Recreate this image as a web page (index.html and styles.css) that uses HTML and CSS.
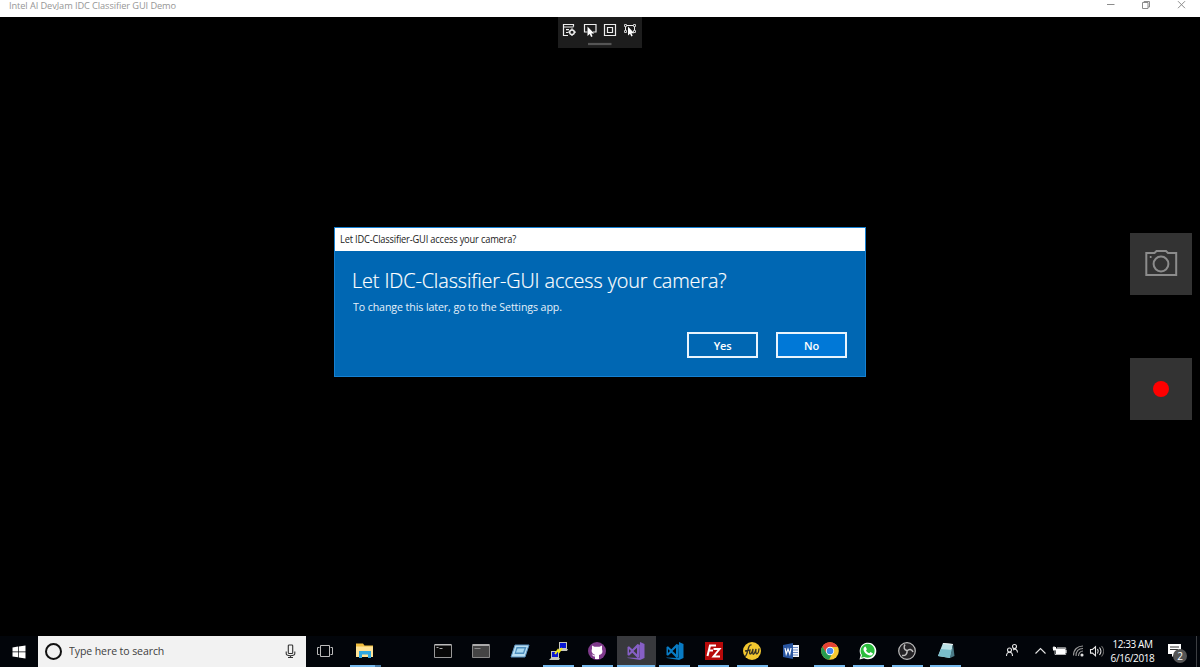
FILE: index.html
```html
<!DOCTYPE html>
<html lang="en">
<head>
<meta charset="utf-8">
<title>Intel AI DevJam IDC Classifier GUI Demo</title>
<link rel="stylesheet" href="styles.css">
</head>
<body>
<div class="screen">
  <header class="titlebar">
    <span class="app-title">Intel AI DevJam IDC Classifier GUI Demo</span>
    <svg class="window-controls" width="90" height="16" viewBox="0 0 90 16" fill="none" stroke="#8c8c8c" stroke-width="1"><path d="M7 4.500h7.500M42.500 2.500h5.500v6h-5.500zM44 2.500V1.500h5.500V7h-1.500M78 1.200l7 7m0-7l-7 7"/></svg>
  </header>
  <main class="stage">
    <div class="debug-bar">
      <svg width="84" height="30" viewBox="0 0 84 30" fill="none" stroke="#eee" stroke-width="1.200">
        <path d="M15.500 9.500V7.500h-10v11h4.500M5.500 10h10M8 12.700h3M8 15.500h2"/><circle cx="14" cy="15.200" r="2.300" stroke-width="1.500"/><path d="M14 11.300v1.600m0 4.600v1.600m-3.900-3.900h1.600m4.600 0h1.600"/>
        <path d="M29.500 15h-3V7.500h11.500v7.500H35"/><path fill="#fff" stroke="none" d="M29.500 9.500v9.500l2.200-1.900 1.400 2.900 1.500-.7-1.300-2.800h2.900z"/>
        <path d="M46.500 7.500h11v11h-11zM49.500 10.500h5v5h-5z"/>
        <path stroke-width="1" d="M69 8.500h6M67.500 10v3M76.500 10v3"/><path stroke-width="1" stroke="#ccc" d="M66.500 7.500h2v2h-2zM75.500 7.500h2v2h-2zM66.500 13.500h2v2h-2zM75.500 13.500h2v2h-2z"/><path fill="#fff" stroke="none" d="M70 9.500v9l2-1.800 1.400 2.800 1.300-.7-1.200-2.600h2.700z"/>
        <path stroke="#555" stroke-width="2.200" d="M30 27h23.500"/>
      </svg>
    </div>
    <section class="dialog">
      <div class="dialog-bar"><span class="dialog-caption">Let IDC-Classifier-GUI access your camera?</span></div>
      <div class="dialog-body">
        <h1 class="heading"><span>Let IDC-Classifier-GUI access your camera?</span></h1>
        <p class="note"><span>To change this later, go to the Settings app.</span></p>
        <div class="actions"><button class="choice">Yes</button><button class="choice primary">No</button></div>
      </div>
    </section>
    <aside class="capture">
      <button class="capture-button" aria-label="Photo"><svg width="62" height="62" viewBox="0 0 62 62" fill="none" stroke="#8c8c8c" stroke-width="2"><path d="M16.300 20h8.200l2-2h9.500l2 2h8.200v22H16.300z"/><circle cx="31" cy="31" r="7.400"/><path d="M19.800 24h1.700"/></svg></button>
      <button class="capture-button" aria-label="Record"><span class="record-dot"></span></button>
    </aside>
  </main>
  <footer class="taskbar">
    <div class="start"><svg width="14" height="14" viewBox="0 0 14 14" fill="#fff"><path d="M.5 2.400L6 1.600v5H.5zM6.700 1.500L13.500.5v6.100H6.700zM.5 7.300H6v5L.5 11.500zM6.700 7.300h6.800v6.200l-6.800-1z"/></svg></div>
    <div class="search"><span class="cortana"></span><span class="search-text">Type here to search</span>
      <svg class="mic" width="11" height="15" viewBox="0 0 11 15" fill="none" stroke="#333" stroke-width="1.100"><rect x="3.300" y="1" width="4.400" height="8.500" rx=".8"/><path d="M1.200 7.500v2c0 3 8.600 3 8.600 0v-2M5.500 11.700V13M3 13.500h5"/></svg>
    </div>
    <div class="task view"><svg width="18" height="16" viewBox="0 0 18 16" fill="none" stroke="#bbb"><path d="M4.500 2.500h9v11h-9zM3.500 4.500h-2v7h2M14.500 4.500h2v7h-2"/></svg></div>
    <div class="task open explorer"><svg width="20" height="18" viewBox="0 0 20 18"><path fill="#f0bd3d" d="M1 1.500h7l1.500 2H18V15H1z"/><path fill="#ffe396" d="M1 4.500h17V15H1z"/><path fill="#2fa8e2" d="M4 9h12v7h-3v-3.500H7V16H4z"/></svg></div>
    <div class="apps">
      <div class="task"><svg width="18" height="16" viewBox="0 0 18 16"><path fill="#080808" stroke="#999" d="M.5 1.500h17v13H.5z"/><path fill="#bbb" d="M1 1h16v1.500H1z"/><path stroke="#aaa" d="M2.500 4.500h2m1 1h3"/></svg></div>
      <div class="task"><svg width="18" height="16" viewBox="0 0 18 16"><path fill="#444" stroke="#888" d="M.5 1.500h17v13H.5z"/><path fill="#aaa" d="M1 1h16v2H1z"/><path stroke="#888" d="M2.500 5.500h6"/></svg></div>
      <div class="task"><svg width="20" height="16" viewBox="0 0 20 16"><path fill="#b8ddf0" stroke="#5990bd" d="M5 2h14l-4 12H1z"/><path fill="#4e8fbe" d="M6.500 4h10l-2.500 7H4.500z"/><path fill="#a9d8ef" d="M7.500 5.500h7l-1.500 4H6z"/></svg></div>
      <div class="task open"><svg width="20" height="20" viewBox="0 0 20 20"><path fill="#c6c6bb" d="M10 1h8v7h1l-1 2H8l2-2zM2 10h8v7h1l-1 2H0l2-2z"/><path fill="#0817d4" d="M11 2h6v5h-6zM3 11h6v5H3z"/><path fill="none" stroke="#eee71c" stroke-width="1.800" d="M6 13l3-4 1 2 3-4"/></svg></div>
      <div class="task open"><svg width="20" height="20" viewBox="0 0 20 20"><circle cx="10" cy="10" r="9" fill="#7f3a8c"/><path fill="#fff" d="M5 4.500l2.500 1.200h5L15 4.500v3.700c1.500 4-1 5.500-3 5.700v4h-4V15.500c-2.500.5-2-1.500-3.500-2 2-.5 2 1 3.500.7v-.4C5 13 4 10 5 8z"/></svg></div>
      <div class="task open active"><svg width="20" height="20" viewBox="0 0 20 20"><path fill="#865fc5" fill-rule="evenodd" d="M14 1l4.500 2v14L14 19 1.500 17v-.5l12 .5zM1.500 6l1.500-.7 3.300 2.900L11.500 3 14 4v12l-2.500 1-5.200-5.200L3 14.700 1.500 14zM3 8v4l2-2zm8-1.200L7.500 10l3.500 3.200z"/></svg></div>
      <div class="task open"><svg width="20" height="20" viewBox="0 0 20 20"><path fill="#087bc4" fill-rule="evenodd" d="M14 1l4.500 2v14L14 19 1.500 17v-.5l12 .5zM1.500 6l1.500-.7 3.300 2.900L11.500 3 14 4v12l-2.500 1-5.200-5.200L3 14.700 1.500 14zM3 8v4l2-2zm8-1.200L7.500 10l3.500 3.200z"/></svg></div>
      <div class="task open"><svg width="20" height="20" viewBox="0 0 20 20"><path fill="#b70909" d="M1 1h18v18H1z"/><path fill="none" stroke="#fff" stroke-width="2" d="M12 4.500H6L3.500 15M4.500 9.500H9M9.500 8h6L9.500 15.500h6.500"/></svg></div>
      <div class="task open"><svg width="20" height="20" viewBox="0 0 20 20"><circle cx="10" cy="10" r="9" fill="#f2c72f"/><path fill="none" stroke="#333022" stroke-width="1.300" d="M9.500 4C5.500 3 6.500 13 3 15.500M3 10l5-1c-1.500 6 1.500 5 3-1-1 7 1 7 3 0-1 7 2.500 6 3-.500"/></svg></div>
      <div class="task"><svg width="18" height="18" viewBox="0 0 18 18"><path fill="#f4f6fa" d="M8 3h9v12H8z"/><path stroke="#6c8ac5" d="M11 5.500h5M11 8h5M11 10.500h5M11 13h5"/><path fill="#2855a0" d="M1 3l10-2v16L1 15z"/><path fill="none" stroke="#fff" stroke-width="1.200" d="M3 6l1.200 6L6 7l1.800 5L9 6"/></svg></div>
      <div class="task open"><svg width="20" height="20" viewBox="0 0 20 20"><circle cx="10" cy="10" r="8.800" fill="#f8ca32"/><path fill="#e54335" d="M2.400 5.500A8.800 8.800 0 0 1 17.700 6H10L6 12z"/><path fill="#289b50" d="M2.400 5.500l4 6.500 5 2-2.300 4.800A8.800 8.800 0 0 1 2.400 5.500z"/><circle cx="10" cy="10" r="4.200" fill="#fff"/><circle cx="10" cy="10" r="3.300" fill="#4387ee"/></svg></div>
      <div class="task open"><svg width="20" height="20" viewBox="0 0 20 20"><path fill="#fff" d="M1.500 18.500l1.200-4.500A8.300 8.300 0 1 1 6 17.300z"/><path fill="#2bbd3e" d="M3.200 16.800L4 14A7 7 0 1 1 6.300 16z"/><path fill="#fff" d="M7.500 5.500l1.400 2.700-.9 1.300c.8 1.400 1.800 2.200 3.300 2.800l1.100-1.300 2.500 1.300c0 2-2 2.500-3.200 2.200C8 13.500 5.500 10.500 5.500 8.200c0-1 1-2.700 2-2.700z"/></svg></div>
      <div class="task open"><svg width="20" height="20" viewBox="0 0 20 20" fill="none"><circle cx="10" cy="10" r="8.300" fill="#242326" stroke="#bdbdbd" stroke-width="1.200"/><path stroke="#bdbdbd" stroke-width="1.500" d="M8 3.500c-2 3-.5 5.500 2 6M16 11c-1-3-4-3.500-6-1M5 14.500c3.500.5 5.500-1.500 5-5"/></svg></div>
      <div class="task open"><svg width="20" height="20" viewBox="0 0 20 20"><path fill="#b9e1e6" d="M7 2l10 1-3 14-12-2z"/><path fill="#79bdcb" d="M5 8l11 1-2 8-12-2z"/><path fill="#4a7a86" d="M17 3l1.500 12-4.500 2z"/><path stroke="#eee" d="M7 2.500l10 1"/></svg></div>
    </div>
    <div class="tray">
      <svg width="104" height="31" viewBox="0 0 104 31" fill="none" stroke="#e6e6e6" stroke-width="1.100">
        <circle cx="9.500" cy="14" r="2"/><path d="M6.500 20c0-5 6-5 6 0"/><circle cx="14.500" cy="10.500" r="2"/><path d="M13 14c2-1.500 4.500-.5 4.500 2.500"/>
        <path d="M35.500 17.500l5-5 5 5"/>
        <path fill="#fff" stroke="none" d="M56 12.500h9V18h-9zM65.300 14h1.200v3h-1.200zM53 11h3v3.500h-3z"/><path stroke-width=".8" d="M57 11.800h8.700v6.700H55v-4M54 10v2m-1.500 0h2"/>
        <path stroke="#999" d="M73.500 19.500c0-6 4-9.500 9.500-9.500M76 20c0-5 3-7.500 7-7.500M78.500 20c0-3 2-5 4.500-5"/><circle cx="82" cy="19" r="1" fill="#fff"/>
        <path d="M90.500 13.500h2l3-2.700v9l-3-2.700h-2zM97.500 13c1 1.500 1 3 0 4.500M99.500 11.500c2 2.500 2 5 0 7.500"/><path stroke="#666" d="M101.500 10c3 3.500 3 7 0 10.500"/>
      </svg>
      <div class="clock"><span class="time">12:33 AM</span><span class="date">6/16/2018</span></div>
      <div class="notifications"><svg width="20" height="20" viewBox="0 0 20 20"><path fill="#fff" d="M1 2h13v10H8l-3 3v-3H1z"/><path stroke="#333" d="M3 5h9M3 7.500h8"/></svg><span class="badge">2</span></div>
    </div>
  </footer>
</div>
</body>
</html>
```

FILE: styles.css
```css
* { box-sizing: border-box; }
body { margin: 0; background: #000; font-family: "Open Sans", "Noto Sans", sans-serif; }
button { font: inherit; padding: 0; margin: 0; border: 0; }
.screen { width: 1200px; height: 667px; display: flex; flex-direction: column; overflow: hidden; }
span { white-space: nowrap; }
.titlebar { height: 17px; background: #fff; display: flex; justify-content: space-between; padding-left: 9px; }
.app-title { color: #969696; font-size: 9.7px; line-height: 11px; height: 11px; letter-spacing: -.1px; transform: scaleX(.955); transform-origin: left; }
.window-controls { width: 90px; margin-right: 10px; }
.stage { height: 619px; display: grid; grid-template-columns: 334px 532px 1fr; grid-template-rows: 210px 150px 1fr; }
.debug-bar { grid-area: 1 / 2; justify-self: center; width: 84px; height: 31px; background: #1d1d1d; }
.debug-bar svg { display: block; }
.dialog { grid-area: 2 / 2; border: 1px solid #1681d2; background: #0067b3; }
.dialog-bar { height: 23px; background: #fff; padding: 0 0 2px 5px; display: flex; align-items: center; }
.dialog-caption { color: #222; font-size: 10px; letter-spacing: -.2px; transform: scaleX(.93); transform-origin: left; }
.dialog-body { padding: 14px 18px 0 17px; color: #fff; }
.heading { margin: 0; font-size: 21px; line-height: 30px; font-weight: 300; letter-spacing: -.1px; -webkit-text-stroke: .2px #fff; }
.heading span, .note span { display: inline-block; transform-origin: left; }
.heading span { transform: scaleX(.943); }
.note { margin: 3px 0 0 1px; font-size: 11.3px; line-height: 17px; color: #e6f1fa; letter-spacing: -.1px; }
.note span { transform: scaleX(.94); }
.actions { display: flex; justify-content: flex-end; gap: 18px; margin-top: 17px; }
.choice { width: 71px; height: 26px; border: 2px solid #e9f4fd; background: #0067b3; color: #fff; font-size: 11px; font-weight: 600; letter-spacing: -.2px; line-height: 21px; }
.primary { background: #0078d7; }
.capture { grid-area: 1 / 3 / 4 / 4; justify-self: end; margin-right: 8px; padding-top: 216px; display: flex; flex-direction: column; gap: 63px; }
.capture-button { width: 62px; height: 62px; background: #333; display: grid; place-items: center; }
.record-dot { width: 16px; height: 16px; border-radius: 50%; background: #f00; }
.taskbar { height: 31px; background: #02050a; display: flex; }
.start { width: 38px; display: grid; place-items: center; }
.search { width: 268px; background: #f2f2f2; display: flex; align-items: center; padding-left: 7px; }
.cortana { width: 17px; height: 17px; border: 2.5px solid #111; border-radius: 50%; }
.search-text { color: #404040; font-size: 11.4px; margin-left: 7px; letter-spacing: -.1px; line-height: 14px; padding-bottom: 1px; transform: scaleX(.925); transform-origin: left; }
.mic { margin: 0 10px 0 auto; }
.task { width: 38.72px; flex: none; display: flex; align-items: center; justify-content: center; border-bottom: 2px solid transparent; }
.view { width: 38px; }
.explorer { width: 42px; }
.open { background: linear-gradient(#76b9ed, #76b9ed) center bottom / 31px 2px no-repeat border-box; }
.explorer.open { background-image: linear-gradient(90deg, #76b9ed 80%, #4b7ca6 80%); }
.active { background: linear-gradient(#76b9ed, #76b9ed) center bottom / 38px 2px no-repeat border-box, #38393d border-box; }
.apps { display: flex; margin-left: 37.2px; }
.tray { display: flex; margin-left: auto; width: 200px; color: #fff; }
.tray > svg { flex: none; }
.clock { width: 57px; display: flex; flex-direction: column; align-items: center; font-size: 10px; line-height: 14px; padding-top: 1px; letter-spacing: -.4px; }
.notifications { position: relative; width: 36px; padding: 6px 0 0 6px; border-right: 1px solid #3c3e42; }
.badge { position: absolute; left: 12px; top: 13px; width: 14px; height: 14px; border-radius: 50%; background: #555; font-size: 10px; line-height: 14px; text-align: center; }
```
